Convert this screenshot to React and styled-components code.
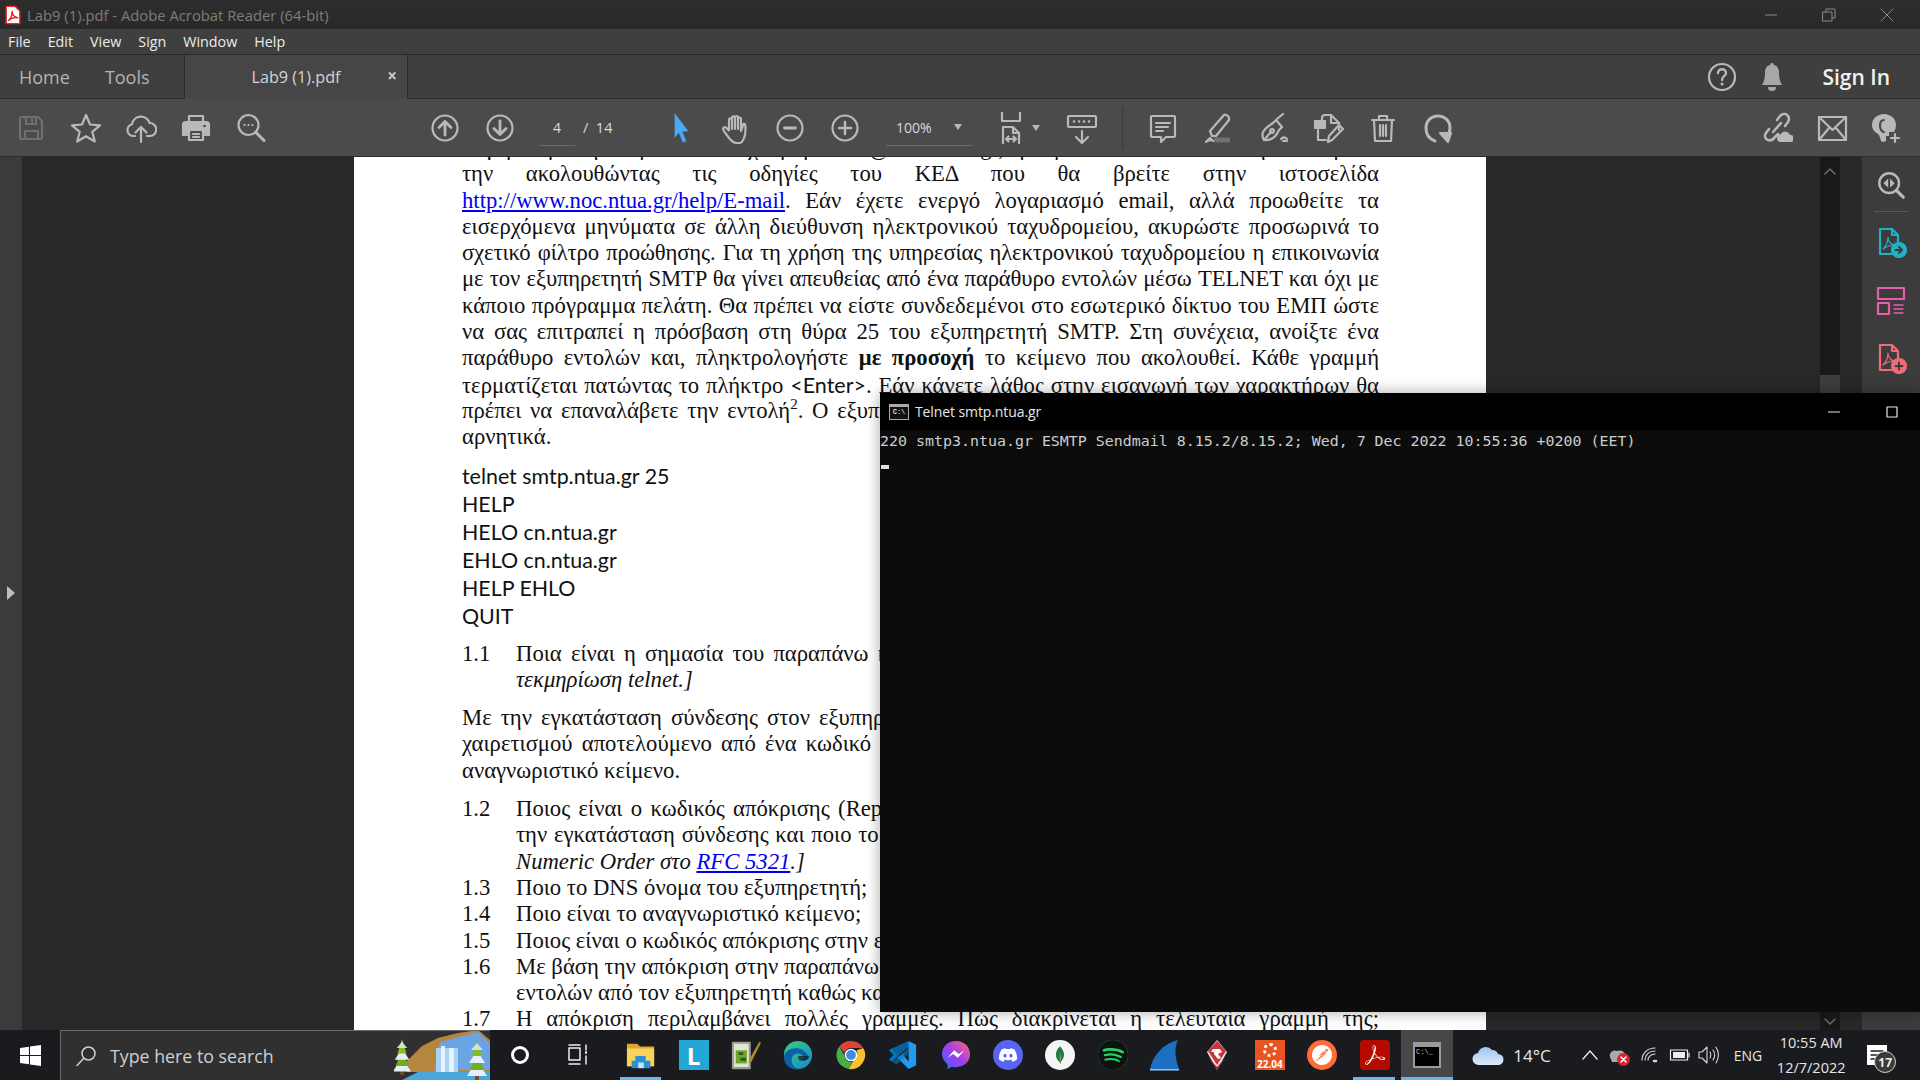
import React from 'react';
import styled, { createGlobalStyle } from 'styled-components';
import { SiDiscord, SiSpotify, SiMongodb, SiPostman, SiAdobeacrobatreader } from 'react-icons/si';

const Global = createGlobalStyle`
  html, body { margin: 0; padding: 0; background: #282828; overflow: hidden; }
  * { box-sizing: border-box; }
`;

const UI = `"Open Sans", "Noto Sans", sans-serif`;

const Screen = styled.div`
  position: relative; width: 1920px; height: 1080px; overflow: hidden;
  display: flex; flex-direction: column; font-family: ${UI};
`;
const TitleBar = styled.div`
  height: 29px; flex: none; display: flex; align-items: center; padding-left: 3px; gap: 4px;
  background: linear-gradient(#2d2d2d, #292929); color: #7d7d7d; font-size: 14.8px;
`;
const TitleText = styled.span` flex: 1; `;
const WinButtons = styled.div` display: flex; margin-right: 4px; `;
const WinButton = styled.div`
  width: 58px; height: 29px; display: flex; align-items: center; justify-content: center;
`;
const MenuBar = styled.div`
  height: 26px; flex: none; display: flex; align-items: center; gap: 17px; padding-left: 8px;
  background: #3f3f3f; border-bottom: 1px solid #2a2a2a; color: #ececec; font-size: 14.3px;
`;
const TabBar = styled.div`
  height: 44px; flex: none; display: flex; align-items: stretch; background: #3f3f3f;
  border-bottom: 1px solid #2a2a2a;
`;
const NavTabs = styled.div`
  width: 184px; display: flex; align-items: center; gap: 35px; padding-left: 19px;
  color: #b4b4b4; font-size: 18px;
`;
const DocTab = styled.div`
  width: 224px; display: flex; align-items: center; position: relative; justify-content: center;
  background: #464646; border-right: 1px solid #2a2a2a; border-left: 1px solid #2a2a2a;
  color: #d4d4d4; font-size: 16.2px; margin-bottom: -1px;
`;
const TabClose = styled.span`
  position: absolute; right: 10px; top: 9px; font-size: 17px; font-weight: 700; color: #c8c8c8;
`;
const TabRight = styled.div`
  flex: 1; display: flex; align-items: center; justify-content: flex-end;
  padding-right: 30px;
`;
const SignIn = styled.span`
  margin-left: 34px; color: #f0f0f0; font-size: 21px; font-weight: 600;
`;
const BellSlot = styled.div` margin-left: 18px; display: flex; `;
const Toolbar = styled.div`
  height: 58px; flex: none; display: flex; align-items: center; padding: 0 9px 0 3px;
  background: #4b4b4b; border-bottom: 1px solid #2c2c2c;
`;
const Tool = styled.div`
  width: ${p => p.$w || 55}px; height: 40px; flex: none; margin-left: ${p => p.$ml || 0}px;
  display: flex; align-items: center; justify-content: center; gap: 5px;
`;
const PageBox = styled.div`
  margin-left: ${p => p.$ml}px; width: ${p => p.$w}px; height: 36px; flex: none;
  border-bottom: 1px solid #6a6a6a; display: flex; align-items: center;
  justify-content: ${p => p.$j || 'center'}; gap: ${p => p.$gap || 16}px; padding: ${p => p.$pad || '0'};
  color: #dadada; font-size: 14px;
`;
const PageTotal = styled.span` margin-left: 8px; flex: none; width: 40px; color: #dadada; font-size: 14.5px; `;
const Caret = styled.span`
  width: 0; height: 0; border-left: 4.5px solid transparent; border-right: 4.5px solid transparent;
  border-top: 6px solid #b8b8b8;
`;
const ToolDivider = styled.div`
  width: 1px; height: 42px; flex: none; background: #3a3a3a; margin-left: ${p => p.$ml}px;
`;
const Grow = styled.div` flex: 1; `;

const Viewer = styled.div` flex: 1; display: flex; min-height: 0; background: #282828; `;
const Rail = styled.div`
  width: 22px; flex: none; background: #3b3b3b; display: flex; align-items: center; justify-content: center;
  padding-right: 1px; padding-bottom: 2px;
`;
const RailArrow = styled.span`
  width: 0; height: 0; border-top: 7px solid transparent; border-bottom: 7px solid transparent;
  border-left: 8px solid #bdbdbd;
`;
const Canvas = styled.div`
  flex: 1; min-width: 0; overflow: hidden; padding-left: 332px; background: #282828;
`;
const Page = styled.div`
  width: 1132px; height: 100%; background: #fff; padding: 0 107px 0 108px; overflow: hidden;
  font-family: "Liberation Serif", "Times New Roman", serif; font-size: 22.7px; line-height: 26.3px; color: #111;
`;
const Content = styled.div` margin-top: -22px; `;
const Line = styled.div`
  white-space: nowrap; height: 26.3px;
  ${p => p.$just ? 'white-space: normal; text-align: justify; text-align-last: justify; overflow: hidden;' : ''}
  ${p => p.$tight ? 'letter-spacing: -0.12px;' : ''}
`;
const Para = styled.div` margin-top: ${p => p.$mt || 0}px; `;
const Item = styled.div` display: grid; grid-template-columns: 54px 1fr; margin-top: ${p => p.$mt || 0}px; `;
const Anchor = styled.a` color: #0000ee; text-decoration: underline; `;
const Calibri = styled.span` font-family: Lato, sans-serif; font-size: 21.5px; `;
const Commands = styled.div`
  margin: 11px 0 11px; font-family: Lato, sans-serif; font-size: 21.4px; line-height: 28px; color: #111;
`;
const Sup = styled.sup` font-size: 15px; line-height: 0; `;
const ScrollBar = styled.div`
  width: 20px; flex: none; background: #191919; display: flex; flex-direction: column;
  align-items: center; padding-top: 9px;
`;
const ScrollGap = styled.div` width: 22px; flex: none; background: #282828; `;
const SidePanel = styled.div`
  width: 58px; flex: none; background: #3c3c3c; display: flex; flex-direction: column; align-items: center;
  padding-top: 8px;
`;
const SideIcon = styled.div` height: ${p => p.$h || 57}px; display: flex; align-items: center; justify-content: center; `;
const SideRule = styled.div` width: 34px; height: 1px; background: #585858; margin: 6px 0 0; `;

const Taskbar = styled.div`
  height: 50px; flex: none; background: #1a1b1f; display: flex; align-items: stretch; position: relative;
`;
const StartSlot = styled.div` width: 60px; display: flex; align-items: center; justify-content: center; `;
const SearchBox = styled.div`
  width: 430px; display: flex; align-items: center; background: #303030; padding-left: 14px;
  border-top: 1px solid #6b6b6b; border-left: 1px solid #6b6b6b; position: relative; overflow: hidden;
  color: #cfcfcf; font-size: 17.8px;
`;
const SearchLabel = styled.span` margin-left: 13px; `;
const SearchArt = styled.svg` position: absolute; right: 0; bottom: 0; `;
const SysSlot = styled.div`
  width: ${p => p.$w || 52.4}px; flex: none; display: flex; align-items: center; justify-content: center;
  position: relative; background: ${p => p.$active ? '#474747' : 'transparent'};
  ${p => p.$open ? `&::after { content: ''; position: absolute; left: ${p.$active ? 0 : 5}px; right: ${p.$active ? 0 : 6}px; bottom: 0; height: 3px; background: #6db5ea; }` : ''}
`;
const AppTiles = styled.div` display: flex; align-items: stretch; margin-left: 6px; `;
const Tray = styled.div` flex: 1; display: flex; align-items: center; color: #e6e6e6; position: relative; padding-left: 1px; `;
const TrayItem = styled.div`
  margin-left: ${p => p.$ml || 0}px; flex: none; display: flex; align-items: center;
  font-size: ${p => p.$fs || 14}px;
`;
const Clock = styled.div`
  margin-left: ${p => p.$ml}px; width: 84px; flex: none; text-align: center; font-size: 14.5px; line-height: 25px; color: #e6e6e6;
`;
const Badge = styled.span`
  position: absolute; right: -8px; bottom: -7px; width: 22px; height: 22px; border-radius: 50%;
  background: #3a3a3a; border: 1.5px solid #cfcfcf; color: #eee; font-size: 12px; font-weight: 700;
  display: flex; align-items: center; justify-content: center;
`;
const Notif = styled.div` position: relative; display: flex; `;

const Terminal = styled.div`
  position: absolute; left: 880px; top: 393px; width: 1040px; height: 619px;
  background: #0c0c0c; box-shadow: 0 0 14px rgba(0,0,0,0.35); display: flex; flex-direction: column;
`;
const TermTitle = styled.div`
  height: 37px; flex: none; background: #000; color: #e8e8e8; display: flex; align-items: center;
  padding: 0 2px 0 9px; gap: 6px; font-size: 14px; letter-spacing: -0.1px;
`;
const TermName = styled.span` flex: 1; `;
const TermButton = styled.div` width: 52px; flex: none; display: flex; justify-content: center; `;
const TermBody = styled.div`
  padding: 0; font-family: "DejaVu Sans Mono", "Liberation Mono", monospace; font-size: 14.95px;
  line-height: 22px; color: #cccccc; white-space: pre;
`;
const TermCursor = styled.div` width: 8px; height: 4px; background: #e0e0e0; margin: 13px 0 0 1px; `;

const Svg = styled.svg`
  width: ${p => p.$s || 32}px; height: ${p => p.$s || 32}px; flex: none; display: block; fill: none;
  stroke: ${p => p.$c || '#b9b9b9'}; stroke-width: ${p => p.$sw || 2.2}; stroke-linecap: round; stroke-linejoin: round;
`;
const I = ({ c, s, sw, children, vb = '0 0 32 32' }) => <Svg viewBox={vb} $c={c} $s={s} $sw={sw}>{children}</Svg>;

const SaveIcon = () => <I c="#6f6f6f"><path d="M5 7a2 2 0 0 1 2-2h16l4 4v16a2 2 0 0 1-2 2H7a2 2 0 0 1-2-2z" /><path d="M11 5v7h10V5M17 7v3M10 27v-8h13v8" /></I>;
const StarIcon = () => <I><path d="M16 3l4 9.5 10 .8-7.7 6.5 2.5 9.7L16 24.3 7.2 29.5 9.7 19.8 2 13.3l10-.8z" /></I>;
const CloudIcon = () => <I><path d="M10 24H8a6 6 0 0 1-1-11.8A9 9 0 0 1 24.5 11 6.5 6.5 0 0 1 25 24h-3" /><path d="M16 30V15M10.5 20.5L16 15l5.5 5.5" /></I>;
const PrintIcon = () => <I><path d="M9 10V4h14v6" /><path fill="#b9b9b9" d="M6 10h20a3 3 0 0 1 3 3v10h-6v-5H9v5H3V13a3 3 0 0 1 3-3z" /><path d="M9 18h14v10H9zM13 22h6M13 25h6" /><path d="M24 14h1" stroke="#4b4b4b" /></I>;
const FindIcon = () => <I><circle cx="13.5" cy="13" r="10" /><path d="M21 20.5l8 8" strokeWidth="3" /><path d="M9.5 13h.1M13.5 13h.1M17.5 13h.1" /></I>;
const UpIcon = () => <I><circle cx="16" cy="16" r="12.5" /><path d="M16 23V9.5M10 15.5l6-6 6 6" strokeWidth="2.8" /></I>;
const DownIcon = () => <I><circle cx="16" cy="16" r="12.5" /><path d="M16 9v13.5M10 16.5l6 6 6-6" strokeWidth="2.8" /></I>;
const PointerIcon = () => <Svg viewBox="0 0 32 32" $c="#4aa8f5" $sw="0.5"><path fill="#4aa8f5" d="M9 2l13 17-6 .5 4 9.5-3 1.2-4-9.7L9 25z" /></Svg>;
const HandIcon = () => <I><path d="M9 26c-2-3-5-6-6-9 0-2 2-2.5 3.5-1L9 18.5V8c0-2.2 3-2.2 3 0V6c0-2.2 3-2.2 3 0v-.5c0-2 3-2 3 0V7c0-2 3-2 3 0v12c2-4 2-8 3-7 1.5-.5 1.5 3 1.5 5 0 6-1 9-3 12-1 2-2 2-6 2-3 0-5-2-7.5-5z" /><path d="M12 8v9M15 6v11M18 6v11" /></I>;
const MinusIcon = () => <I><circle cx="16" cy="16" r="12.5" /><path d="M10.5 16h11" strokeWidth="2.8" /></I>;
const PlusIcon = () => <I><circle cx="16" cy="16" r="12.5" /><path d="M10 16h12M16 10v12" strokeWidth="2.5" /></I>;
const FitIcon = () => <I><path d="M7 1v8h18V1" /><path d="M8 31V15h10l6 6v10M18 15v6h6M11 27h10M13.5 24.5L11 27l2.5 2.5M18.5 24.5L21 27l-2.5 2.5" /></I>;
const RulerIcon = () => <I s={36} vb="0 0 36 32"><rect x="4" y="4" width="28" height="11" rx="1" /><path d="M10 9.5h.1M15 9.5h.1M20 9.5h.1M25 9.5h.1" strokeWidth="2.5" /><path d="M18 19v12M12 25l6 6 6-6" /></I>;
const CommentIcon = () => <I><path d="M5 4h22a1 1 0 0 1 1 1v19a1 1 0 0 1-1 1h-8l-5 5v-5H5a1 1 0 0 1-1-1V5a1 1 0 0 1 1-1z" /><path d="M9 11h14M9 15h12M9 19h7" /></I>;
const HighlightIcon = () => <I><path d="M10 24l-2-5L22 3c2-1.5 6 2 5 5L14 24z" /><path d="M4 30l4-4 3 3" fill="#b9b9b9" /><path d="M12 28h16" stroke="#707070" strokeWidth="5" strokeLinecap="butt" /></I>;
const PenIcon = () => <I><path d="M7 28c-4-7 0-11 9-17l3-3 6 7-3 3c-3 7-7 11-15 10z" /><path d="M7 28l7-8M20 7l6-5" /><circle cx="15" cy="19" r="1.8" /><path d="M24 27c2-2 4-2 6 0M26 29h4" /></I>;
const StampIcon = () => <I><path d="M10 10V6a3 3 0 0 1 3-3h6l8 8v7" /><path d="M19 3v8h8" /><path fill="#b9b9b9" d="M3 9h10v7H3z" /><path d="M6 18v10h8M16 30l1-6 10-11 4 4-11 11z" /></I>;
const TrashIcon = () => <I><path d="M5 8h22M12 8V4h8v4M7 8l1 21h16l1-21M13 13v11M16 13v11M19 13v11" /></I>;
const RotateIcon = () => <I><path d="M13 29C7 27 4 22 4 16 4 9 9 4 16 4s12 5 12 12c0 3-1 6-3 8" strokeWidth="3" /><path fill="#b9b9b9" d="M18 21l11 0-3 9z" /></I>;
const LinkIcon = () => <I><path d="M12 20l8-9M8 17l-3 4c-2 3-1 6 2 7s5 0 7-3l3-3M16 8l3-4c2-2 5-3 7-1 3 2 2 5 1 7l-3 4" strokeWidth="2.5" /><path fill="#b9b9b9" stroke="none" d="M20 30a4 4 0 0 1 0-8 5 5 0 0 1 9 1 3.5 3.5 0 0 1 1 7z" /></I>;
const MailIcon = () => <I><rect x="3" y="5" width="27" height="23" /><path d="M3 5l13.5 13L30 5M3 28l10-12M30 28L20 16" /></I>;
const UserIcon = () => <I><path fill="#b9b9b9" stroke="none" d="M15 2c7 0 12 5 12 11 0 3-1 5-2 7h-5v4h-3v5c-1 1-4 1-5 0-1-3-1-5-3-7-4-2-6-5-6-9C3 7 8 2 15 2z" /><path d="M15 8c-3 0-4 3-4 6s2 6 4 6" stroke="#4b4b4b" /><path d="M26 22v8M22 26h8" /></I>;
const HelpIcon = () => <I><circle cx="16" cy="16" r="13" /><path d="M12 12c0-5 8-5 8 0 0 3-4 3-4 7" strokeWidth="2.4" /><path d="M16 23h.1" strokeWidth="3" /></I>;
const BellIcon = () => <I c="#a8a8a8"><path fill="#a8a8a8" stroke="none" d="M16 2c1.5 0 2 1 2 2 4 1 5 4 5 8 0 5 1 9 3 12H6c2-3 3-7 3-12 0-4 1-7 5-8 0-1 .5-2 2-2zM12 26h8c0 3-1.5 4-4 4s-4-1-4-4z" /></I>;

const SideZoom = () => <I s={30}><circle cx="14" cy="14" r="10.5" strokeWidth="2.6" /><path d="M22 22l7 7" strokeWidth="3.5" /><path fill="#b9b9b9" stroke="none" d="M13 9v10l-5-5zM15 9v10l5-5z" /></I>;
const FilePdf = ({ c, children }) => <I c={c} s={32}><path d="M17 28H5V3h12l6 6v7M17 3v6h6" /><path d="M8 23c3-3 5-7 5-12 0 5 2 7 7 8-4 0-8 1-12 4z" strokeWidth="1.2" />{children}</I>;
const SideExport = () => <FilePdf c="#20b2c4"><circle cx="24" cy="24" r="7" fill="#20b2c4" /><path d="M20.5 24h6M24 21l3 3-3 3" stroke="#3c3c3c" strokeWidth="2" /></FilePdf>;
const SideCombine = () => <FilePdf c="#ee6c78"><circle cx="24" cy="24" r="7" fill="#ee6c78" /><path d="M20.5 24h7M24 20.5v7" stroke="#3c3c3c" strokeWidth="2" /></FilePdf>;
const SideLayout = () => <I c="#e65db0" s={32}><rect x="3" y="3" width="26" height="11" /><rect x="3" y="18" width="11" height="11" /><path d="M19 20h9M19 24h9M19 28h9" strokeWidth="1.5" /></I>;

const WinLogo = () => <Svg viewBox="0 0 20 20" $s={21} $c="none"><path fill="#fff" d="M0 2.8L8.5 1.6V9.5H0zM9.5 1.5L20 0V9.5H9.5zM0 10.5H8.5V18.4L0 17.2zM9.5 10.5H20V20L9.5 18.5z" /></Svg>;
const SearchGlass = () => <I c="#d0d0d0" s={22} sw="1.5" vb="0 0 22 22"><circle cx="13.5" cy="8.5" r="6.5" /><path d="M8.5 13.5L2 20.5" /></I>;
const Tree = ({ x, h = 1 }) => (
  <g transform={`translate(${x} 0) scale(${h})`}>
    <path fill="#7a4a20" d="M-2 42h4v8h-4z" />
    <path fill="#e8eef8" d="M-10 46L0 30l10 16z" />
    <path fill="#6fae1e" d="M-7 40L0 22l7 18z" />
    <path fill="#e8eef8" d="M-8 33L0 20l8 13z" />
    <path fill="#7fbf20" d="M-5 26L0 10l5 16z" />
    <path fill="#e8eef8" d="M-6 20l6-7 6 7z" opacity="0.8" />
  </g>
);
const Waterfall = () => (
  <SearchArt width="96" height="50" viewBox="0 0 96 50">
    <path fill="#b6853f" d="M12 32L28 16 44 8l20-5 20-3 12 10v32H12z" />
    <path fill="#6aa4e2" d="M46 12l38-10 12 12v26H40z" />
    <path fill="#a9d3f2" d="M42 18h22v26H42z" />
    <path fill="#e6f3fc" d="M47 16h4v28h-4zM55 18h5v26h-5z" />
    <path fill="#48a7d8" d="M24 42h72v8H8z" />
    <Tree x={8} h={0.9} />
    <Tree x={83} h={1} />
  </SearchArt>
);
const Cortana = () => <I c="#fff" s={20} sw="3" vb="0 0 20 20"><circle cx="10" cy="10" r="7.5" /></I>;
const TaskView = () => <I c="#eee" s={22} sw="1.5" vb="0 0 22 22"><path d="M1 1h11M1 20h11M1 4h11v12H1z" /><path d="M18 1v5M18 12v8" /><path d="M18 8v1" strokeWidth="2" /></I>;
const Explorer = () => <Svg viewBox="0 0 32 32" $c="none" $s={30}><path fill="#e0a52c" d="M1 4h11l3 3h15v21H1z" /><path fill="#fad35c" d="M1 9h29v19H1z" /><path fill="#2b8fd8" d="M10 17h11v5h5v8H6v-8h4z" /><path fill="#bfe4fb" d="M13 24h6v6h-6z" /></Svg>;
const LTile = styled.div`
  width: 30px; height: 30px; background: #22a7d6; color: #fff; font: 700 24px ${UI}; display: flex;
  align-items: center; justify-content: center;
`;
const Notepad = () => <Svg viewBox="0 0 32 32" $c="none" $s={30}><path fill="#dfe6cf" stroke="#999" d="M2 3h18v27H2z" /><path fill="#6ea72a" d="M5 11h12v14H5z" /><path fill="#35581a" d="M8 13h5v3H8zM10 19h6v3h-6z" /><path fill="#b08a2c" d="M20 20L30 2l2 1-10 20-3 2z" /></Svg>;
const Edge = () => (
  <Svg viewBox="0 0 32 32" $c="none" $s={30}>
    <defs><linearGradient id="eg" x1="0" y1="0" x2="1" y2="1"><stop offset="0" stopColor="#36d17a" /><stop offset="1" stopColor="#1689cf" /></linearGradient></defs>
    <circle cx="16" cy="16" r="15" fill="url(#eg)" />
    <path fill="#0c5fa8" d="M1 18C2 8 20 4 27 17c1 3-1 5-6 5 3-5-3-9-8-7-4 2-5 7-2 12 1 2 4 4 7 4-9 2-17-4-17-13z" />
    <path fill="#1a1b1f" d="M16 17h12c-1 4-4 5-9 5-2 0-3-3-3-5z" opacity="0.7" />
  </Svg>
);
const Chrome = () => (
  <Svg viewBox="0 0 32 32" $c="none" $s={30}>
    <path fill="#db4437" d="M16 1a15 15 0 0 1 13 7.5H16a7.5 7.5 0 0 0-7 5L3.5 7A15 15 0 0 1 16 1z" />
    <path fill="#4aae48" d="M3.5 7L9 16.5A7.5 7.5 0 0 0 17.5 23.4L13.5 30.8A15 15 0 0 1 3.5 7z" />
    <path fill="#fbc02d" d="M29 8.5A15 15 0 0 1 13.5 30.8l6.5-11A7.5 7.5 0 0 0 22 11z" />
    <circle cx="16" cy="16" r="6" fill="#3f8ae8" stroke="#fff" strokeWidth="1.5" />
  </Svg>
);
const VSCode = () => <Svg viewBox="0 0 32 32" $c="none" $s={30}><path fill="#0078c4" d="M1 11l3-2 8 7-8 7-3-2 5-5z" /><path fill="#0d65a8" d="M4 9l18-8 1 6L9 18z" opacity="0.9" /><path fill="#1f9cf0" d="M22 1l8 4v22l-8 4-12-12 12-9V9l-6 7 6 7V1z" /><path fill="#0a77c2" d="M4 23l18-14v6L9 26 4 23z" opacity="0.6" /></Svg>;
const Messenger = () => (
  <Svg viewBox="0 0 32 32" $c="none" $s={30}>
    <defs><linearGradient id="mg" x1="0" y1="1" x2="1" y2="0"><stop offset="0" stopColor="#2f6bff" /><stop offset="0.5" stopColor="#a33cf0" /><stop offset="1" stopColor="#ff6a68" /></linearGradient></defs>
    <path fill="url(#mg)" d="M16 1c8.5 0 15 6 15 14s-6.5 14-15 14c-1.5 0-3-.2-4-.6L7 31v-5C3.5 23 1 19.5 1 15 1 7 7.5 1 16 1z" />
    <path fill="#fff" d="M7 19l7-8 5 4 6-4-7 8-5-4z" />
  </Svg>
);
const Round = styled.div`
  width: 30px; height: 30px; border-radius: 50%; background: ${p => p.$bg}; color: ${p => p.$fg};
  display: flex; align-items: center; justify-content: center; font-size: ${p => p.$fs || 18}px;
`;
const Wireshark = () => <Svg viewBox="0 0 32 32" $c="none" $s={32}><path fill="#1d6fc2" d="M1 30C4 17 13 5 29 1c-4 8-3 18 1 29z" /><path fill="#9cc6ee" d="M1 30h29v1.5H1z" /></Svg>;
const Redis = () => <Svg viewBox="0 0 32 32" $c="none" $s={32}><path fill="#e7e7e7" d="M16 1l10 12-10 18L6 13z" /><path fill="#c9363a" d="M16 2l9 10-9 14L7 12z" /><path fill="#9e2a2e" d="M7 18l9 13 9-13-9 10z" /><path fill="#fff" d="M12 10h7l2 3-4 2 3 4-3 1-4-5v-2h-3z" /></Svg>;
const UbuntuTile = styled.div`
  width: 30px; height: 30px; background: #e95420; color: #fff; position: relative; display: flex;
  flex-direction: column; align-items: center; font-size: 10px; font-weight: 700; line-height: 10px; padding-top: 3px;
`;
const UbuntuRing = styled.div` width: 14px; height: 14px; border-radius: 50%; border: 3px dotted #fff; margin-bottom: 2px; `;
const AcroTile = styled.div`
  width: 30px; height: 30px; border-radius: 4px; background: #b30b00; color: #fff; display: flex;
  align-items: center; justify-content: center; font-size: 20px;
`;
const ConsoleIcon = styled.div`
  width: 28px; height: 26px; background: #000; border: 2px solid #9a9a9a; border-top-width: 5px; display: flex;
  color: #ccc; font: 7px "Liberation Mono", monospace; padding: 1px;
`;
const ConsoleSmall = styled.div`
  width: 20px; height: 16px; flex: none; background: #111; border: 1px solid #aaa; border-top-width: 3px;
  color: #ddd; font: 700 7px/10px "Liberation Mono", monospace; text-align: center; overflow: hidden; letter-spacing: 0;
`;
const Cloud = () => <Svg viewBox="0 0 32 22" $c="none" $s={32}><defs><linearGradient id="cl" x1="0" y1="0" x2="0" y2="1"><stop offset="0" stopColor="#9cc5f2" /><stop offset="1" stopColor="#dce9f9" /></linearGradient></defs><path fill="url(#cl)" d="M7 21a6 6 0 0 1-1-12 8 8 0 0 1 14-3 6 6 0 0 1 6 4 5.5 5.5 0 0 1 0 11z" /></Svg>;
const Chevron = () => <I c="#eee" s={18} sw="1.3" vb="0 0 18 18"><path d="M2 13l7-8 7 8" /></I>;
const OneDrive = () => <Svg viewBox="0 0 24 24" $c="none" $s={24}><path fill="#aaa" d="M3 14a5 5 0 0 1 7-6 6 6 0 0 1 8 3v4l-6 4H5z" /><circle cx="16.5" cy="16.5" r="6.5" fill="#d9232e" /><path d="M14 14l5 5M19 14l-5 5" stroke="#fff" strokeWidth="1.5" /></Svg>;
const Wifi = () => <I c="#d8d8d8" s={20} sw="1.2" vb="0 0 20 20"><path d="M2 15c0-7 6-12 13-12M5 15c0-5 4-9 10-9M8 15c0-3 3-6 7-6" /><path d="M14 16h2" strokeWidth="2.5" /></I>;
const Battery = () => <I c="#eee" s={22} sw="1.2" vb="0 0 22 22"><rect x="1.5" y="6" width="17" height="10" /><path fill="#eee" d="M4 8h12v6H4z" stroke="none" /><path d="M20 9v4" /></I>;
const Volume = () => <I c="#d8d8d8" s={22} sw="1.1" vb="0 0 22 22"><path d="M1 8h3l5-5v16l-5-5H1zM12 8c1 2 1 4 0 6M15 6c2 3 2 7 0 10M18 3c3 5 3 11 0 16" /></I>;
const NotifIcon = () => <Svg viewBox="0 0 22 22" $c="none" $s={22}><path fill="#fff" d="M1 1h20v20H1z" /><path stroke="#222" strokeWidth="1.5" d="M5 7h12M5 11h12M5 15h8" /></Svg>;
const PdfSmall = () => <Svg viewBox="0 0 18 22" $c="none" $s={20}><path fill="#fff" stroke="#ee2222" strokeWidth="1.6" d="M1.5 1.5h10l5 5v14h-15z" /><path stroke="#e01b1b" strokeWidth="1.5" d="M4 17c3-2 4-6 4-10 0 4 2 6 6 7-4-.5-7 0-10 3z" /></Svg>;

const MinGlyph = ({ c = '#8a8a8a' }) => <I c={c} s={12} sw="1" vb="0 0 12 12"><path d="M0 6h12" /></I>;
const RestoreGlyph = () => <I c="#8a8a8a" s={14} sw="1" vb="0 0 14 14"><path d="M1 4h9v9H1zM4 4V1h9v9h-3" /></I>;
const CloseGlyph = () => <I c="#8a8a8a" s={14} sw="1" vb="0 0 14 14"><path d="M1 1l12 12M13 1L1 13" /></I>;
const MaxGlyph = () => <I c="#e8e8e8" s={12} sw="1.2" vb="0 0 12 12"><path d="M1 1h10v10H1z" /></I>;
const ScrollUp = () => <I c="#6f6f6f" s={12} sw="1.5" vb="0 0 12 12"><path d="M1 8l5-5 5 5" /></I>;
const ScrollDown = styled.div`
  position: absolute; left: 1820px; top: 1012px; width: 20px; height: 18px; background: #191919;
  display: flex; align-items: center; justify-content: center;
`;
const ScrollThumb = styled.div` width: 20px; height: 20px; background: #3e3e3e; margin-top: 197px; `;

const App = () => (
  <Screen>
    <Global />
    <TitleBar>
      <PdfSmall />
      <TitleText>Lab9 (1).pdf - Adobe Acrobat Reader (64-bit)</TitleText>
      <WinButtons>
        <WinButton><MinGlyph /></WinButton>
        <WinButton><RestoreGlyph /></WinButton>
        <WinButton><CloseGlyph /></WinButton>
      </WinButtons>
    </TitleBar>
    <MenuBar>
      <span>File</span><span>Edit</span><span>View</span><span>Sign</span><span>Window</span><span>Help</span>
    </MenuBar>
    <TabBar>
      <NavTabs><span>Home</span><span>Tools</span></NavTabs>
      <DocTab>Lab9 (1).pdf<TabClose>×</TabClose></DocTab>
      <TabRight>
        <HelpIcon />
        <BellSlot><BellIcon /></BellSlot>
        <SignIn>Sign In</SignIn>
      </TabRight>
    </TabBar>
    <Toolbar>
      <Tool><SaveIcon /></Tool>
      <Tool><StarIcon /></Tool>
      <Tool><CloudIcon /></Tool>
      <Tool><PrintIcon /></Tool>
      <Tool><FindIcon /></Tool>
      <Tool $ml={139}><UpIcon /></Tool>
      <Tool><DownIcon /></Tool>
      <PageBox $ml={12} $w={36}>4</PageBox>
      <PageTotal>/&nbsp;&nbsp;14</PageTotal>
      <Tool $ml={31}><PointerIcon /></Tool>
      <Tool $w={53}><HandIcon /></Tool>
      <Tool><MinusIcon /></Tool>
      <Tool><PlusIcon /></Tool>
      <PageBox $ml={14} $w={87} $j="flex-start" $pad="0 0 0 10px" $gap={22}>100%<Caret /></PageBox>
      <Tool $ml={13} $w={62}><FitIcon /><Caret /></Tool>
      <Tool $ml={6}><RulerIcon /></Tool>
      <ToolDivider $ml={13} />
      <Tool $ml={12}><CommentIcon /></Tool>
      <Tool><HighlightIcon /></Tool>
      <Tool><PenIcon /></Tool>
      <Tool><StampIcon /></Tool>
      <Tool><TrashIcon /></Tool>
      <Tool><RotateIcon /></Tool>
      <Grow />
      <Tool><LinkIcon /></Tool>
      <Tool><MailIcon /></Tool>
      <Tool $w={52}><UserIcon /></Tool>
    </Toolbar>
    <Viewer>
      <Rail><RailArrow /></Rail>
      <Canvas>
        <Page>
          <Content>
            <Line $just>λογαριασμό ηλεκτρονικού ταχυδρομείου @mail.ntua.gr, μπορείτε να τον αποκτήσετε άμεσα</Line>
            <Line $just>την ακολουθώντας τις οδηγίες του ΚΕΔ που θα βρείτε στην ιστοσελίδα</Line>
            <Line $just><Anchor>http://www.noc.ntua.gr/help/E-mail</Anchor>. Εάν έχετε ενεργό λογαριασμό email, αλλά προωθείτε τα</Line>
            <Line $just>εισερχόμενα μηνύματα σε άλλη διεύθυνση ηλεκτρονικού ταχυδρομείου, ακυρώστε προσωρινά το</Line>
            <Line $just $tight>σχετικό φίλτρο προώθησης. Για τη χρήση της υπηρεσίας ηλεκτρονικού ταχυδρομείου η επικοινωνία</Line>
            <Line $just $tight>με τον εξυπηρετητή SMTP θα γίνει απευθείας από ένα παράθυρο εντολών μέσω TELNET και όχι με</Line>
            <Line $just>κάποιο πρόγραμμα πελάτη. Θα πρέπει να είστε συνδεδεμένοι στο εσωτερικό δίκτυο του ΕΜΠ ώστε</Line>
            <Line $just>να σας επιτραπεί η πρόσβαση στη θύρα 25 του εξυπηρετητή SMTP. Στη συνέχεια, ανοίξτε ένα</Line>
            <Line $just>παράθυρο εντολών και, πληκτρολογήστε <b>με προσοχή</b> το κείμενο που ακολουθεί. Κάθε γραμμή</Line>
            <Line $just>τερματίζεται πατώντας το πλήκτρο <Calibri>&lt;Enter&gt;</Calibri>. Εάν κάνετε λάθος στην εισαγωγή των χαρακτήρων θα</Line>
            <Line $just>πρέπει να επαναλάβετε την εντολή<Sup>2</Sup>. Ο εξυπηρετητής θα απαντήσει στις λανθασμένες εντολές με</Line>
            <Line>αρνητικά.</Line>
            <Commands>
              <div>telnet smtp.ntua.gr 25</div>
              <div>HELP</div>
              <div>HELO cn.ntua.gr</div>
              <div>EHLO cn.ntua.gr</div>
              <div>HELP EHLO</div>
              <div>QUIT</div>
            </Commands>
            <Item>
              <span>1.1</span>
              <div>
                <Line $just>Ποια είναι η σημασία του παραπάνω κειμένου που εμφανίζεται; [Υπόδειξη: Δείτε εδώ την</Line>
                <Line><i>τεκμηρίωση telnet.]</i></Line>
              </div>
            </Item>
            <Para $mt={12}>
              <Line $just>Με την εγκατάσταση σύνδεσης στον εξυπηρετητή SMTP λαμβάνετε ένα πρώτο μήνυμα από τον</Line>
              <Line $just>χαιρετισμού αποτελούμενο από ένα κωδικό απόκρισης, το DNS όνομα του εξυπηρετητή και ένα</Line>
              <Line>αναγνωριστικό κείμενο.</Line>
            </Para>
            <Item $mt={12}>
              <span>1.2</span>
              <div>
                <Line $just>Ποιος είναι ο κωδικός απόκρισης (Reply Code) που λάβατε από τον εξυπηρετητή κατά την</Line>
                <Line $just>την εγκατάσταση σύνδεσης και ποιο το νόημά του; <i>[Υπόδειξη: Δείτε την ενότητα Reply Codes</i></Line>
                <Line><i>Numeric Order στο <Anchor>RFC 5321</Anchor>.]</i></Line>
              </div>
            </Item>
            <Item><span>1.3</span><Line>Ποιο το DNS όνομα του εξυπηρετητή;</Line></Item>
            <Item><span>1.4</span><Line>Ποιο είναι το αναγνωριστικό κείμενο;</Line></Item>
            <Item><span>1.5</span><Line>Ποιος είναι ο κωδικός απόκρισης στην εντολή HELP;</Line></Item>
            <Item>
              <span>1.6</span>
              <div>
                <Line>Με βάση την απόκριση στην παραπάνω εντολή, ποια είναι η λίστα των</Line>
                <Line>εντολών από τον εξυπηρετητή καθώς και η σημασία τους;</Line>
              </div>
            </Item>
            <Item>
              <span>1.7</span>
              <Line $just>Η απόκριση περιλαμβάνει πολλές γραμμές. Πώς διακρίνεται η τελευταία γραμμή της;</Line>
            </Item>
          </Content>
        </Page>
      </Canvas>
      <ScrollBar><ScrollUp /><ScrollThumb /></ScrollBar>
      <ScrollGap />
      <SidePanel>
        <SideIcon $h={40}><SideZoom /></SideIcon>
        <SideRule />
        <SideIcon $h={60}><SideExport /></SideIcon>
        <SideIcon><SideLayout /></SideIcon>
        <SideIcon><SideCombine /></SideIcon>
      </SidePanel>
    </Viewer>
    <Taskbar>
      <StartSlot><WinLogo /></StartSlot>
      <SearchBox>
        <SearchGlass />
        <SearchLabel>Type here to search</SearchLabel>
        <Waterfall />
      </SearchBox>
      <SysSlot $w={59}><Cortana /></SysSlot>
      <SysSlot $w={60}><TaskView /></SysSlot>
      <AppTiles>
        <SysSlot $open><Explorer /></SysSlot>
        <SysSlot><LTile>L</LTile></SysSlot>
        <SysSlot><Notepad /></SysSlot>
        <SysSlot><Edge /></SysSlot>
        <SysSlot><Chrome /></SysSlot>
        <SysSlot><VSCode /></SysSlot>
        <SysSlot><Messenger /></SysSlot>
        <SysSlot><Round $bg="#5865f2" $fg="#fff"><SiDiscord /></Round></SysSlot>
        <SysSlot><Round $bg="#f4f4f4" $fg="#1f7a3c"><SiMongodb /></Round></SysSlot>
        <SysSlot><Round $bg="#1ed760" $fg="#111" $fs={30}><SiSpotify /></Round></SysSlot>
        <SysSlot><Wireshark /></SysSlot>
        <SysSlot><Redis /></SysSlot>
        <SysSlot><UbuntuTile><UbuntuRing />22.04</UbuntuTile></SysSlot>
        <SysSlot><Round $bg="#ff6c37" $fg="#fff" $fs={20}><SiPostman /></Round></SysSlot>
        <SysSlot $open><AcroTile><SiAdobeacrobatreader /></AcroTile></SysSlot>
        <SysSlot $open $active><ConsoleIcon>C:\_</ConsoleIcon></SysSlot>
      </AppTiles>
      <Tray>
        <TrayItem $ml={18}><Cloud /></TrayItem>
        <TrayItem $ml={9} $fs={17}>14°C</TrayItem>
        <TrayItem $ml={30}><Chevron /></TrayItem>
        <TrayItem $ml={8}><OneDrive /></TrayItem>
        <TrayItem $ml={9}><Wifi /></TrayItem>
        <TrayItem $ml={9}><Battery /></TrayItem>
        <TrayItem $ml={7}><Volume /></TrayItem>
        <TrayItem $ml={14} $fs={14}>ENG</TrayItem>
        <Clock $ml={7}><div>10:55 AM</div><div>12/7/2022</div></Clock>
        <TrayItem $ml={13}><Notif><NotifIcon /><Badge>17</Badge></Notif></TrayItem>
      </Tray>
    </Taskbar>
    <ScrollDown><I c="#6f6f6f" s={12} sw="1.5" vb="0 0 12 12"><path d="M1 4l5 5 5-5" /></I></ScrollDown>
    <Terminal>
      <TermTitle>
        <ConsoleSmall>C:\</ConsoleSmall>
        <TermName>Telnet smtp.ntua.gr</TermName>
        <TermButton><MinGlyph c="#e8e8e8" /></TermButton>
        <TermButton><MaxGlyph /></TermButton>
      </TermTitle>
      <TermBody>220 smtp3.ntua.gr ESMTP Sendmail 8.15.2/8.15.2; Wed, 7 Dec 2022 10:55:36 +0200 (EET)</TermBody>
      <TermCursor />
    </Terminal>
  </Screen>
);

export default App;
